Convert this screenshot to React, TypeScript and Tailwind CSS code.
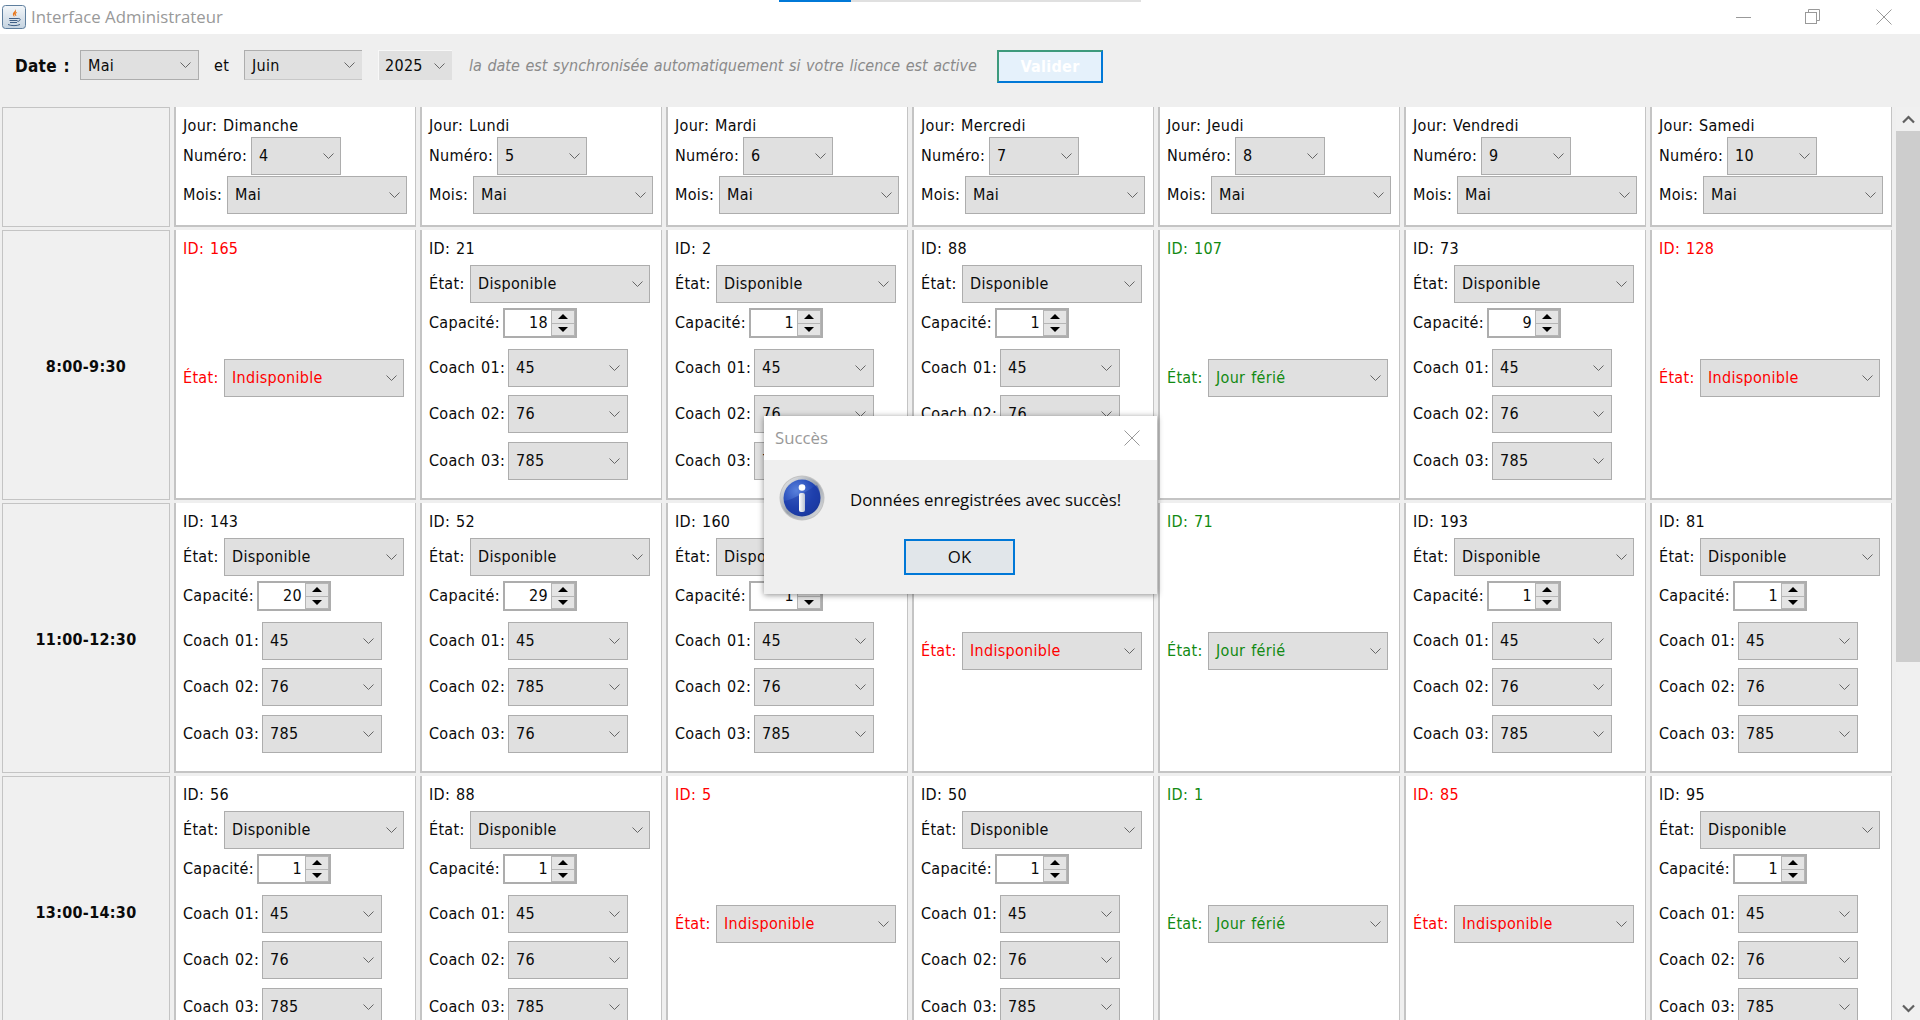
import React from "react";

type Slot =
  | { id: number; kind: "open"; cap: number; c1: string; c2: string; c3: string }
  | { id: number; kind: "closed" }
  | { id: number; kind: "holiday" };

const o = (id: number, cap: number, c2 = "76", c3 = "785"): Slot => ({ id, kind: "open", cap, c1: "45", c2, c3 });
const x = (id: number): Slot => ({ id, kind: "closed" });
const h = (id: number): Slot => ({ id, kind: "holiday" });

const days = [
  ["Dimanche", "4"],
  ["Lundi", "5"],
  ["Mardi", "6"],
  ["Mercredi", "7"],
  ["Jeudi", "8"],
  ["Vendredi", "9"],
  ["Samedi", "10"],
];

const rows: { time: string; slots: Slot[] }[] = [
  { time: "8:00-9:30", slots: [x(165), o(21, 18), o(2, 1), o(88, 1), h(107), o(73, 9), x(128)] },
  { time: "11:00-12:30", slots: [o(143, 20), o(52, 29, "785", "76"), o(160, 1), x(34), h(71), o(193, 1), o(81, 1)] },
  { time: "13:00-14:30", slots: [o(56, 1), o(88, 1), x(5), o(50, 1), h(1), x(85), o(95, 1)] },
];

function Chevron({ className = "" }: { className?: string }) {
  return (
    <svg width="11" height="7" viewBox="0 0 11 7" className={className} fill="none" stroke="#666" strokeWidth="1">
      <path d="M0.5 0.5 L5.5 5.5 L10.5 0.5" />
    </svg>
  );
}

function Select({ value, w, color = "text-[#0a0a0a]", arrow = "pr-[6px]" }: { value: string; w: string; color?: string; arrow?: string }) {
  return (
    <div className={`${w} h-[38px] shrink-0 flex items-center justify-between pl-[7px] ${arrow} bg-[#e0e0e0] border border-[#adadad] ${color}`}>
      <span>{value}</span>
      <Chevron />
    </div>
  );
}

function Spinner({ value }: { value: number }) {
  return (
    <div className="w-[74px] h-[30px] shrink-0 flex border-2 border-[#adadad] bg-white">
      <span className="flex-1 flex items-center justify-end pr-[3px] text-[#0a0a0a]">{value}</span>
      <div className="w-[24px] flex flex-col">
        <div className="flex-1 flex items-center justify-center bg-[#e4e4e4] border border-[#b5b5b5]">
          <div className="w-0 h-0 border-x-[5px] border-x-transparent border-b-[5px] border-b-black" />
        </div>
        <div className="flex-1 flex items-center justify-center bg-[#e4e4e4] border border-t-0 border-[#b5b5b5]">
          <div className="w-0 h-0 border-x-[5px] border-x-transparent border-t-[5px] border-t-black" />
        </div>
      </div>
    </div>
  );
}

const cellCls = "bg-white border-l-2 border-r border-b-2 border-[#c4c4c4] pl-[7px] overflow-hidden";

function SlotCell({ slot }: { slot: Slot }) {
  if (slot.kind !== "open") {
    const color = slot.kind === "closed" ? "text-[#ff0000]" : "text-[#128a12]";
    return (
      <div className={`${cellCls} flex flex-col ${color}`}>
        <div className="mt-[10px] h-[18px] leading-[18px]">ID: {slot.id}</div>
        <div className="flex-1 flex items-center">
          <span className="w-[41px] shrink-0">État:</span>
          <Select value={slot.kind === "closed" ? "Indisponible" : "Jour férié"} w="w-[180px]" color={color} />
        </div>
      </div>
    );
  }
  return (
    <div className={`${cellCls} flex flex-col text-[#0a0a0a]`}>
      <div className="mt-[10px] h-[18px] leading-[18px]">ID: {slot.id}</div>
      <div className="mt-[7px] flex items-center">
        <span className="w-[41px] shrink-0">État:</span>
        <Select value="Disponible" w="w-[180px]" />
      </div>
      <div className="mt-[5px] flex items-center">
        <span className="w-[74px] shrink-0">Capacité:</span>
        <Spinner value={slot.cap} />
      </div>
      <div className="mt-[11px] flex items-center">
        <span className="w-[79px] shrink-0">Coach 01:</span>
        <Select value={slot.c1} w="w-[120px]" arrow="pr-[7px]" />
      </div>
      <div className="mt-[8px] flex items-center">
        <span className="w-[79px] shrink-0">Coach 02:</span>
        <Select value={slot.c2} w="w-[120px]" arrow="pr-[7px]" />
      </div>
      <div className="mt-[9px] flex items-center">
        <span className="w-[79px] shrink-0">Coach 03:</span>
        <Select value={slot.c3} w="w-[120px]" arrow="pr-[7px]" />
      </div>
    </div>
  );
}

function JavaIcon() {
  return (
    <svg width="24" height="24" viewBox="0 0 24 24" className="shrink-0">
      <defs>
        <linearGradient id="jb" x1="0" y1="0" x2="0" y2="1">
          <stop offset="0" stopColor="#f4f7fa" />
          <stop offset="1" stopColor="#c5d3e0" />
        </linearGradient>
      </defs>
      <rect x="0.5" y="0.5" width="23" height="23" rx="3" fill="url(#jb)" stroke="#5f7f9e" />
      <path d="M13 3 C15 6 10 7 11 10 C11.5 11.5 12.5 12 12.5 12 C11 9.5 16 8 13 3 Z" fill="#e8781e" />
      <path d="M14.5 7 C13.5 8.5 13 9.5 14 11" stroke="#e8781e" strokeWidth="1" fill="none" />
      <path d="M7 13.5 H16 M7.5 15.5 H15.5 M8 17.5 H15 M6 19.5 C9 21 15 21 18 19.5" stroke="#3f5f86" strokeWidth="1" fill="none" />
      <path d="M16 13.5 C19 13 19 16 15.5 16.5" stroke="#3f5f86" strokeWidth="1" fill="none" />
    </svg>
  );
}

function InfoIcon() {
  return (
    <svg width="46" height="46" viewBox="0 0 46 46" className="shrink-0">
      <defs>
        <radialGradient id="blue" cx="0.35" cy="0.3" r="0.85">
          <stop offset="0" stopColor="#5a82dc" />
          <stop offset="0.55" stopColor="#2347b6" />
          <stop offset="1" stopColor="#16318f" />
        </radialGradient>
        <linearGradient id="ring" x1="0" y1="0" x2="1" y2="1">
          <stop offset="0" stopColor="#f2f2f2" />
          <stop offset="0.5" stopColor="#9aa2ad" />
          <stop offset="1" stopColor="#e4e4e4" />
        </linearGradient>
        <linearGradient id="bar" x1="0" y1="0" x2="1" y2="0">
          <stop offset="0" stopColor="#ffffff" />
          <stop offset="1" stopColor="#b9c2d2" />
        </linearGradient>
      </defs>
      <circle cx="23" cy="23" r="22.5" fill="#8f8f8f" opacity="0.45" />
      <circle cx="23" cy="23" r="21.5" fill="url(#ring)" />
      <circle cx="23" cy="23" r="18.5" fill="url(#blue)" />
      <path d="M5 26 C14 25 28 16 38 10 C42 16 43 26 37 33 C30 42 14 42 7 33 Z" fill="#1b3aa6" opacity="0.55" />
      <circle cx="23" cy="12.5" r="3.3" fill="#ffffff" />
      <rect x="20" y="18" width="6" height="19" rx="2" fill="url(#bar)" />
    </svg>
  );
}

export default function App() {
  return (
    <div className="relative w-[1920px] h-[1020px] overflow-hidden bg-[#efefef] flex flex-col font-['DejaVu_Sans'] font-stretch-condensed text-[16px] leading-[18px] tracking-[0.3px] [word-spacing:1px]">
      {/* loading line above the window */}
      <div className="absolute left-[779px] top-0 w-[362px] h-[2px] bg-[#e0e0e0] z-10">
        <div className="w-[72px] h-full bg-[#0078d7]" />
      </div>

      {/* title bar */}
      <div className="h-[34px] shrink-0 bg-white flex items-center pl-[2px]">
        <JavaIcon />
        <span className="ml-[5px] font-['Open_Sans'] font-stretch-normal text-[16.8px] tracking-normal [word-spacing:0px] text-[#999]">Interface Administrateur</span>
        <div className="ml-auto flex items-center pr-[28px]">
          <svg width="16" height="16" viewBox="0 0 16 16" stroke="#999" fill="none" className="mr-[53px]"><path d="M0 8.5 H15" /></svg>
          <svg width="16" height="16" viewBox="0 0 16 16" stroke="#999" fill="none" className="mr-[55px]">
            <rect x="0.5" y="3.5" width="11" height="11" />
            <path d="M3.5 3.5 V0.5 H14.5 V11.5 H11.5" />
          </svg>
          <svg width="16" height="16" viewBox="0 0 16 16" stroke="#999" fill="none"><path d="M0.5 0.5 L15.5 15.5 M15.5 0.5 L0.5 15.5" /></svg>
        </div>
      </div>

      {/* toolbar */}
      <div className="h-[73px] shrink-0 flex items-start pt-[16px] pl-[15px] text-[#0a0a0a]">
        <span className="w-[65px] h-[30px] flex items-center pt-[2px] font-bold text-[17px]">Date :</span>
        <div className="w-[119px] h-[30px] flex items-center justify-between pl-[7px] pr-[7px] pt-[1px] bg-[#e0e0e0] border border-[#adadad]"><span>Mai</span><Chevron /></div>
        <span className="w-[45px] h-[30px] flex items-center pl-[15px] pt-[1px]">et</span>
        <div className="w-[118px] h-[30px] flex items-center justify-between pl-[7px] pr-[7px] pt-[1px] bg-[#e0e0e0] border border-[#adadad] border-r-0 border-b-[#c8c8c8]"><span>Juin</span><Chevron /></div>
        <div className="ml-[16px] w-[74px] h-[30px] flex items-center justify-between pl-[6px] pr-[7px] pt-[1px] bg-[#e0e0e0] border-l border-t border-[#f8f8f8]"><span>2025</span><Chevron /></div>
        <span className="ml-[17px] w-[528px] h-[30px] flex items-center pt-[1px] italic tracking-normal text-[#8a8a8a]">la date est synchronisée automatiquement si votre licence est active</span>
        <div className="w-[106px] h-[33px] flex items-center justify-center bg-[#e5f1fb] border-2 border-[#0078d7] border-t-[#3d9a7c] border-l-[#3d9a7c] text-white font-bold text-[16px]">Valider</div>
      </div>

      {/* body */}
      <div className="flex-1 min-h-0 flex overflow-hidden">
        <div className="flex-1 min-w-0 pl-[2px]">
          <div className="grid grid-cols-[168px_repeat(7,242px)] grid-rows-[120px_270px_270px_270px] gap-x-[4px] gap-y-[3px]">
            <div className="bg-[#f0f0f0] border border-[#c4c4c4]" />
            {days.map(([day, num]) => (
              <div key={day} className={`${cellCls} text-[#0a0a0a]`}>
                <div className="mt-[10px] h-[18px]">Jour: {day}</div>
                <div className="mt-[2px] flex items-center">
                  <span className="w-[68px] shrink-0">Numéro:</span>
                  <Select value={num} w="w-[90px]" />
                </div>
                <div className="mt-[1px] flex items-center">
                  <span className="w-[44px] shrink-0">Mois:</span>
                  <Select value="Mai" w="w-[180px]" />
                </div>
              </div>
            ))}
            {rows.map((row) => (
              <React.Fragment key={row.time}>
                <div className="bg-[#f0f0f0] border border-[#c4c4c4] flex items-center justify-center pt-[3px] font-bold text-[#0a0a0a]">{row.time}</div>
                {row.slots.map((s, i) => (
                  <SlotCell key={i} slot={s} />
                ))}
              </React.Fragment>
            ))}
          </div>
        </div>

        {/* scrollbar */}
        <div className="w-[24px] shrink-0 bg-[#f0f0f0] flex flex-col items-center">
          <div className="h-[24px] flex items-center justify-center">
            <svg width="13" height="9" viewBox="0 0 13 9" fill="none" stroke="#606060" strokeWidth="2.2"><path d="M1 7.5 L6.5 2 L12 7.5" /></svg>
          </div>
          <div className="w-full h-[531px] bg-[#cdcdcd]" />
          <div className="mt-auto h-[24px] flex items-center justify-center">
            <svg width="13" height="9" viewBox="0 0 13 9" fill="none" stroke="#606060" strokeWidth="2.2"><path d="M1 1.5 L6.5 7 L12 1.5" /></svg>
          </div>
        </div>
      </div>

      {/* dialog */}
      <div className="absolute left-[764px] top-[416px] w-[393px] h-[178px] bg-[#efefef] shadow-[0_1px_6px_rgba(0,0,0,0.45)] flex flex-col font-['Open_Sans'] font-stretch-normal tracking-normal [word-spacing:0px] text-[16.8px] text-[#0a0a0a]">
        <div className="h-[44px] shrink-0 bg-white flex items-center justify-between pl-[11px] pr-[17px] text-[#999]">
          <span>Succès</span>
          <svg width="16" height="16" viewBox="0 0 16 16" stroke="#999" fill="none"><path d="M0.5 0.5 L15.5 15.5 M15.5 0.5 L0.5 15.5" /></svg>
        </div>
        <div className="flex items-center pl-[15px] pt-[15px]">
          <InfoIcon />
          <span className="ml-[25px] pt-[4px] whitespace-nowrap">Données enregistrées avec succès!</span>
        </div>
        <div className="mt-[18px] ml-[140px] w-[111px] h-[36px] flex items-center justify-center bg-[#e1e6ea] border-2 border-[#0078d7]">OK</div>
      </div>
    </div>
  );
}
